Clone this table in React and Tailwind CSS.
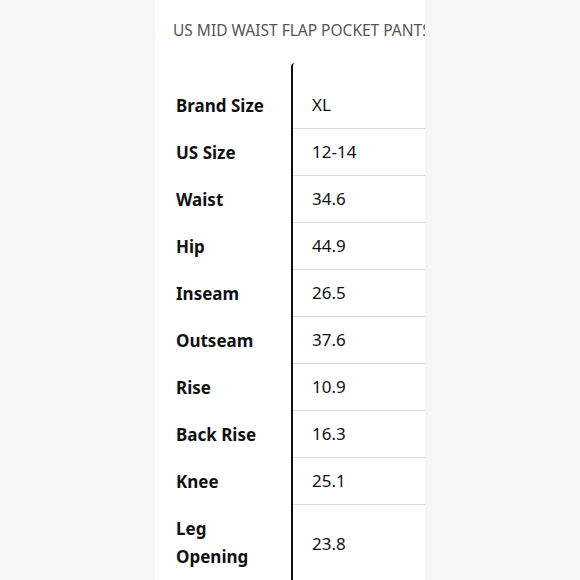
import React from 'react';

const rows = [
  ['Brand Size', 'XL'],
  ['US Size', '12-14'],
  ['Waist', '34.6'],
  ['Hip', '44.9'],
  ['Inseam', '26.5'],
  ['Outseam', '37.6'],
  ['Rise', '10.9'],
  ['Back Rise', '16.3'],
  ['Knee', '25.1'],
];

const App = () => {
  return (
    <div className="w-[580px] h-[580px] overflow-hidden flex justify-center bg-[#f6f6f6] font-['Noto_Sans',sans-serif]">
      <div className="w-[270px] h-full bg-white flex flex-col overflow-hidden">
        <div className="shrink-0 pt-[20px] pl-[18px] text-[15.5px] leading-[20px] text-[#555] whitespace-nowrap overflow-hidden">
          US MID WAIST FLAP POCKET PANTS
        </div>

        <div className="shrink-0 mt-[23px] flex flex-col">
          <div className="flex h-[19px]">
            <div className="w-[136px]" />
            <div className="flex-1 border-l-2 border-[#111] rounded-tl-sm" />
          </div>
          {rows.map(([label, value]) => (
            <div key={label} className="flex h-[47px]">
              <div className="w-[136px] pl-[21px] flex items-center text-[17px] font-bold text-[#111]">
                {label}
              </div>
              <div className="flex-1 border-l-2 border-[#111]">
                <div className="h-full border-b border-[#dcdcdc] pl-[19px] flex items-center text-[17px] text-[#111]">
                  {value}
                </div>
              </div>
            </div>
          ))}
          <div className="flex h-[80px]">
            <div className="w-[136px] pl-[21px] pt-[10px] text-[17px] leading-[28px] font-bold text-[#111]">
              Leg
              <br />
              Opening
            </div>
            <div className="flex-1 border-l-2 border-[#111] pl-[19px] pt-[25px] text-[17px] leading-[28px] text-[#111]">
              23.8
            </div>
          </div>
        </div>
      </div>
    </div>
  );
};

export default App;
